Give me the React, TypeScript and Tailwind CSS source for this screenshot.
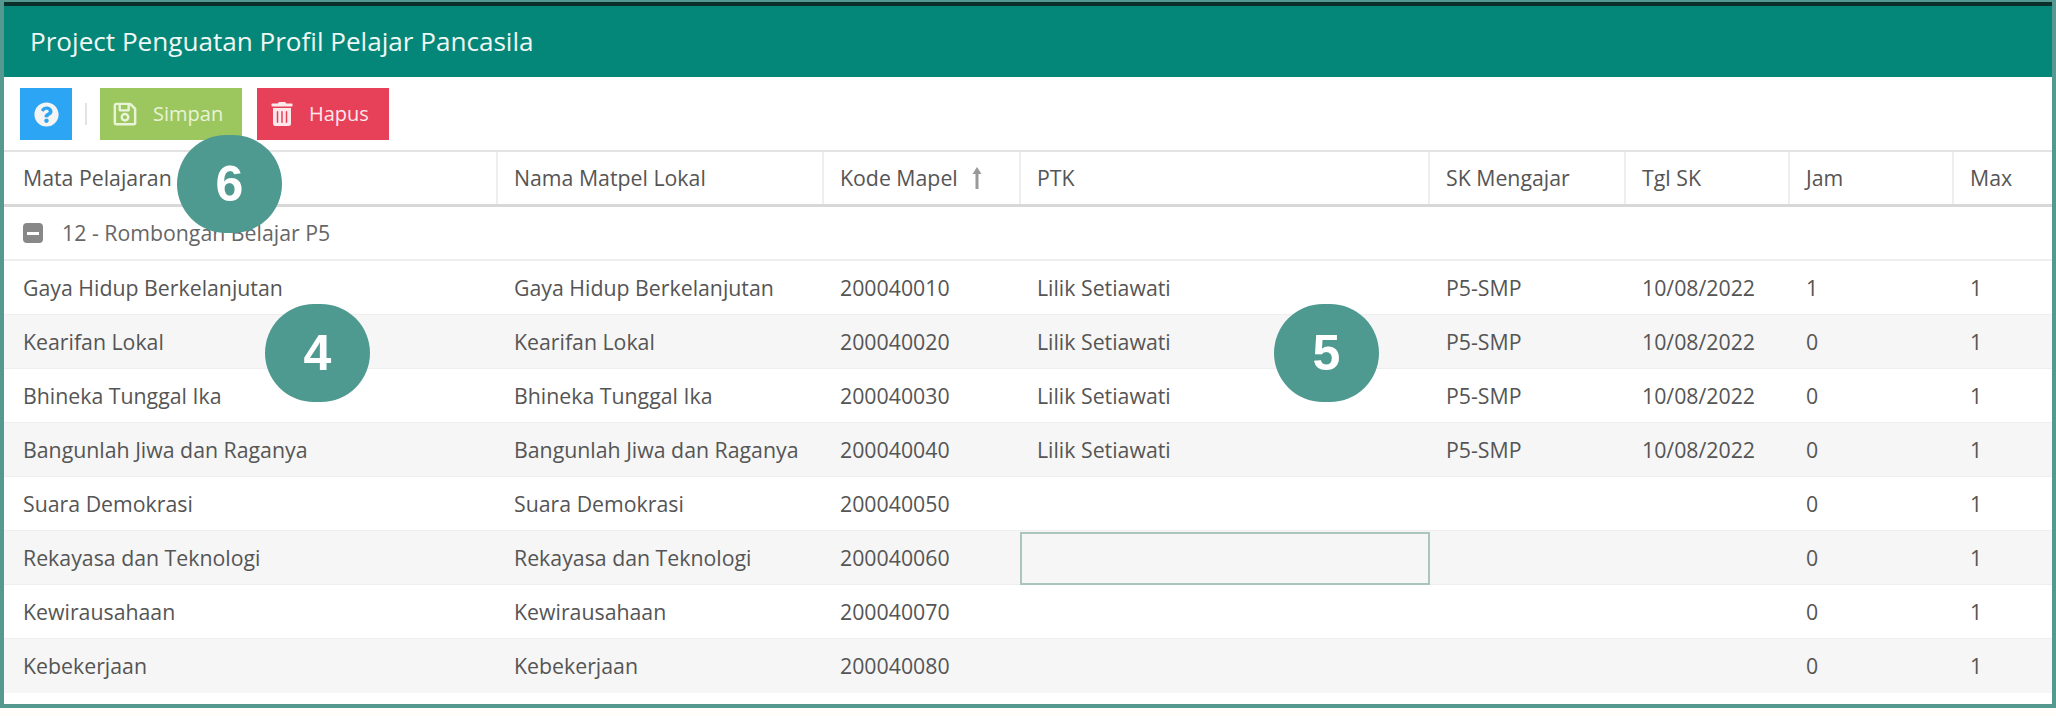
import { FaQuestionCircle, FaRegSave, FaTrashAlt } from "react-icons/fa";

const rows = [
	["Gaya Hidup Berkelanjutan", "200040010", "Lilik Setiawati", "P5-SMP", "10/08/2022", "1"],
	["Kearifan Lokal", "200040020", "Lilik Setiawati", "P5-SMP", "10/08/2022", "0"],
	["Bhineka Tunggal Ika", "200040030", "Lilik Setiawati", "P5-SMP", "10/08/2022", "0"],
	["Bangunlah Jiwa dan Raganya", "200040040", "Lilik Setiawati", "P5-SMP", "10/08/2022", "0"],
	["Suara Demokrasi", "200040050", "", "", "", "0"],
	["Rekayasa dan Teknologi", "200040060", "", "", "", "0"],
	["Kewirausahaan", "200040070", "", "", "", "0"],
	["Kebekerjaan", "200040080", "", "", "", "0"],
];

const gridCols = "grid grid-cols-[494px_326px_197px_409px_196px_164px_164px_94px]";

const HeadCell = ({ label, first, last }: { label: string; first?: boolean; last?: boolean }) => (
	<div className={`flex items-center gap-[14px] pr-4 ${first ? "pl-[19px]" : "pl-4"} ${last ? "" : "border-r-2 border-[#eeeeee]"}`}>
		{label}
		{label === "Kode Mapel" && (
			<svg width="10" height="22" viewBox="0 0 10 22" fill="#999999">
				<path d="M5 0 L9.5 7 H6.5 V22 H3.5 V7 H0.5 Z" />
			</svg>
		)}
	</div>
);

const Badge = ({ n, className }: { n: string; className: string }) => (
	<div
		className={`absolute flex items-center justify-center w-[105px] h-[98px] rounded-full bg-[#4f9a90] text-white font-bold text-[50px] font-['Liberation_Sans',sans-serif] ${className}`}
	>
		{n}
	</div>
);

export default function App() {
	return (
		<div className="relative w-[2056px] h-[716px] bg-[#fffefb] overflow-hidden font-['Open_Sans',sans-serif] text-[21.3px] text-[#555555]">
			<div className="h-[708px] border-x-4 border-b-4 border-t-2 border-[#54988f] bg-white">
				<div className="h-[4px] bg-[#0b2f2b]" />
				<div className="h-[71px] bg-[#048778] text-[#f0f8f6] text-[26.1px] flex items-center pl-[26px]">
					Project Penguatan Profil Pelajar Pancasila
				</div>
				<div className="h-[73px] flex items-center pl-4 pt-[1px]">
					<button className="w-[52px] h-[52px] bg-[#2da5f5] flex items-center justify-center">
						<FaQuestionCircle size={25} color="#f4f4f4" />
					</button>
					<div className="w-[2px] h-[22px] bg-[#e3e3e3] mx-[13px]" />
					<button className="w-[142px] h-[52px] bg-[#9cc75f] text-[20px] text-[#e8f3d8] flex items-center pl-[12px] gap-[15px]">
						<FaRegSave size={26} />
						Simpan
					</button>
					<button className="ml-[15px] w-[132px] h-[52px] bg-[#e64158] text-[20px] text-[#fde8eb] flex items-center pl-[13px] gap-[15px]">
						<FaTrashAlt size={24} />
						Hapus
					</button>
				</div>

				<div className={`${gridCols} h-[57px] border-t-2 border-b-[3px] border-t-[#e3e3e3] border-b-[#d8d8d8]`}>
					<HeadCell label="Mata Pelajaran" first />
					<HeadCell label="Nama Matpel Lokal" />
					<HeadCell label="Kode Mapel" />
					<HeadCell label="PTK" />
					<HeadCell label="SK Mengajar" />
					<HeadCell label="Tgl SK" />
					<HeadCell label="Jam" />
					<HeadCell label="Max" last />
				</div>

				<div className="h-[54px] flex items-center pl-[19px] gap-[19px] border-b-2 border-[#eeeeee] text-[#666666]">
					<span className="w-[20px] h-[20px] rounded-[4px] bg-[#888888] flex items-center justify-center">
						<span className="w-[12px] h-[3px] bg-white" />
					</span>
					12 - Rombongan Belajar P5
				</div>

				{rows.map((row, i) => (
					<div
						key={row[1]}
						className={`${gridCols} h-[54px] items-stretch ${i % 2 === 1 ? "bg-[#f6f6f6]" : "bg-white"} ${
							i === rows.length - 1 ? "" : "border-b border-[#eeeeee]"
						}`}
					>
						<div className="flex items-center pl-[19px] whitespace-nowrap">{row[0]}</div>
						<div className="flex items-center px-4 whitespace-nowrap">{row[0]}</div>
						<div className="flex items-center px-4">{row[1]}</div>
						<div className={`flex items-center px-4 ${i === 5 ? "border-2 border-[#aac4be] mt-[1px] mb-[-1px] -ml-[1px]" : ""}`}>{row[2]}</div>
						<div className="flex items-center px-4">{row[3]}</div>
						<div className="flex items-center px-4">{row[4]}</div>
						<div className="flex items-center px-4">{row[5]}</div>
						<div className="flex items-center px-4">1</div>
					</div>
				))}
			</div>

			<Badge n="6" className="left-[177px] top-[135px]" />
			<Badge n="4" className="left-[265px] top-[304px]" />
			<Badge n="5" className="left-[1274px] top-[304px]" />
		</div>
	);
}
